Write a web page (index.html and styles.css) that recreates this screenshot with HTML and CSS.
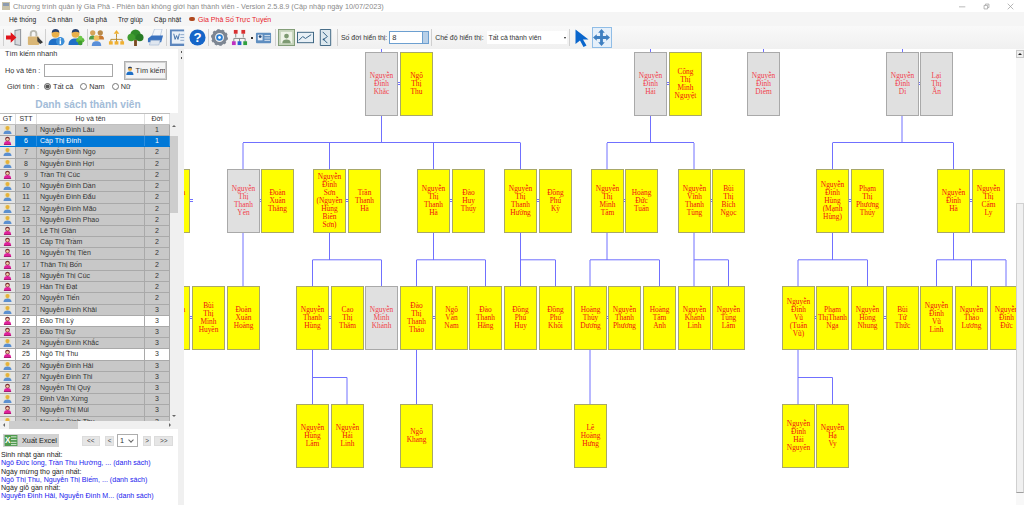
FILE: index.html
```html
<!DOCTYPE html>
<html lang="vi">
  <head>
    <meta charset="UTF-8" />
    <title>Chương trình quản lý Gia Phả</title>
    <link rel="stylesheet" href="styles.css">
  </head>
  <body>
    <svg class="sprites" width="0" height="0">
      <defs>
        <symbol id="male" viewBox="0 0 10 10">
          <rect x="1.5" y="0.5" width="7" height="9" fill="#e8e2c8"/>
          <path d="M0.5 10c0-3 2-4 4.5-4s4.500 1 4.500 4z" fill="#5b8fd0"/>
          <circle cx="5" cy="3.400" r="2.300" fill="#e6b23a"/>
        </symbol>
        <symbol id="female" viewBox="0 0 10 10">
          <path d="M1 9.500c0-3 1.500-4 4-4s4 1 4 4z" fill="#e0209a"/>
          <circle cx="5" cy="3.300" r="2.600" fill="#7a2a30"/>
          <circle cx="5" cy="3.800" r="1.500" fill="#f3c9a5"/>
          <rect x="1" y="9" width="8" height="1" fill="#a0106a"/>
        </symbol>
        <symbol id="user" viewBox="0 0 18 18">
          <circle cx="8" cy="5" r="4.200" fill="#e9b04a"/>
          <path d="M4 4c0-3 2-4 4-4s4 1 4 4c-2-1.500-5-1.500-8 0z" fill="#27406e"/>
          <path d="M0.500 17c0-5 3-7 7.500-7s7 2 7 7z" fill="#1f6fc6"/>
        </symbol>
      </defs>
    </svg>

    <div class="titlebar">
      <svg class="app-icon" viewBox="0 0 8 8"><rect width="8" height="8" fill="#c9c2a8"/><rect x="1" y="1" width="6" height="3" fill="#8c9bb0"/></svg>
      <span class="title-text">Chương trình quản lý Gia Phả - Phiên bản không giới hạn thành viên - Version 2.5.8.9 (Cập nhập ngày 10/07/2023)</span>
      <div class="win-buttons">
        <svg viewBox="0 0 10 10"><path d="M0 5.500h9" stroke="#999" fill="none"/></svg>
        <svg viewBox="0 0 10 10"><path d="M1.500 3.500h5v5h-5zM3.500 3V1.500h5v5H7" stroke="#999" fill="none"/></svg>
        <svg viewBox="0 0 10 10"><path d="M1 1l8 8M9 1l-8 8" stroke="#999" fill="none"/></svg>
      </div>
    </div>

    <div class="menubar">
      <span class="menu-item">Hệ thống</span>
      <span class="menu-item">Cá nhân</span>
      <span class="menu-item">Gia phả</span>
      <span class="menu-item">Trợ giúp</span>
      <span class="menu-item">Cập nhật</span>
      <span class="menu-online"><i class="online-dot"></i>Gia Phả Số Trực Tuyến</span>
    </div>

    <div class="toolbar">
      <i class="sep sep-first"></i>
      <svg class="tool" viewBox="0 0 18 18"><path d="M9 1l7-1v18l-7-1z" fill="#8a8f96"/><path d="M10 2l5-1v16l-5-1z" fill="#d7dade"/><path d="M0 7h5V3.500L11 9l-6 5.500V11H0z" fill="#e0141c"/></svg>
      <svg class="tool" viewBox="0 0 18 18"><path d="M4 8V5a4 4 0 0 1 8 0v3h-2V5a2 2 0 0 0-4 0v3z" fill="#b9b9b0"/><rect x="2" y="8" width="12" height="9" rx="1" fill="#d9b676"/><path d="M12 8l6 6-3 2-3-3z" fill="#3a3a3a"/></svg>
      <i class="sep"></i>
      <svg class="tool" viewBox="0 0 18 18"><use href="#user" width="18" height="18"/><circle cx="13" cy="13" r="4.500" fill="#3b8ed8"/><rect x="12.300" y="12" width="1.500" height="4" fill="#fff"/><rect x="12.300" y="9.800" width="1.500" height="1.400" fill="#fff"/></svg>
      <svg class="tool" viewBox="0 0 18 18"><use href="#user" width="18" height="18"/><circle cx="11" cy="12" r="2.400" fill="#5cb83c"/><circle cx="15" cy="12" r="2.400" fill="#5cb83c"/><circle cx="13" cy="9.500" r="2.400" fill="#6fca4c"/><circle cx="13" cy="14.800" r="2.400" fill="#3f9c2c"/></svg>
      <i class="sep sep-thin"></i>
      <svg class="tool" viewBox="0 0 18 18"><circle cx="5" cy="4" r="2.800" fill="#d8a45a"/><path d="M1 11c0-3 2-4 4-4s4 1 4 4z" fill="#4f9c46"/><circle cx="13" cy="4" r="2.800" fill="#b98a4a"/><path d="M9 11c0-3 2-4 4-4s4 1 4 4z" fill="#c87830"/><circle cx="9" cy="9.500" r="3" fill="#f0c060"/><path d="M4 18c0-4 2-5 5-5s5 1 5 5z" fill="#5a8fd8"/></svg>
      <svg class="tool" viewBox="0 0 18 18"><path d="M9 5v4M3 14v-3h12v3M9 9v5" stroke="#b88a2a" fill="none"/><path d="M9 1l3 4H6z" fill="#f0b030"/><rect x="1" y="13" width="4" height="3.500" fill="#f0b030"/><rect x="7" y="13" width="4" height="3.500" fill="#f0b030"/><rect x="13" y="13" width="4" height="3.500" fill="#f0b030"/></svg>
      <svg class="tool" viewBox="0 0 18 18"><rect x="7.500" y="11" width="3" height="7" fill="#7a4a20"/><circle cx="9" cy="6" r="5.500" fill="#2f8a2a"/><circle cx="4.500" cy="9" r="4" fill="#3f9c30"/><circle cx="13.500" cy="9" r="4" fill="#277a24"/></svg>
      <svg class="tool" viewBox="0 0 18 18"><path d="M8 0h8l-2 8H5z" fill="#f2f5fa" stroke="#8aa6c8" stroke-width="0.500"/><path d="M1 10l4-3h12l-2 7H1z" fill="#3a72c0"/><path d="M4 12h10l-1.500 5H2.500z" fill="#dfe6ef" stroke="#8aa6c8" stroke-width="0.500"/></svg>
      <i class="sep"></i>
      <svg class="tool" viewBox="0 0 18 18"><rect x="1" y="0.500" width="15" height="17.500" fill="#5c86bd"/><rect x="3" y="2.500" width="14" height="13" fill="#eaf0f7"/><path d="M5 5l1.500 6L8 7l1.500 4L11 5" stroke="#3f6ea8" fill="none"/><path d="M12 6h4M12 9h4M12 12h4" stroke="#8aa6c8"/></svg>
      <svg class="tool" viewBox="0 0 18 18"><circle cx="9" cy="9" r="8.500" fill="#1565c8"/><text x="9" y="14" text-anchor="middle" class="help-mark">?</text></svg>
      <i class="sep"></i>
      <svg class="tool" viewBox="0 0 18 18"><circle cx="9" cy="9" r="6.500" fill="none" stroke="#7d8692" stroke-width="3.500"/><circle cx="9" cy="9" r="8" fill="none" stroke="#7d8692" stroke-width="2" stroke-dasharray="2.500 2.500"/><circle cx="9" cy="9" r="3.500" fill="#2a7fd4"/><circle cx="9" cy="9" r="1.500" fill="#fff"/></svg>
      <svg class="tool" viewBox="0 0 18 18"><path d="M5 5v4M13 5v4M3 14v-4h12v4M9 10v4" stroke="#888" fill="none"/><rect x="3" y="1" width="4" height="4" fill="#d83030"/><rect x="11" y="1" width="4" height="4" fill="#d83030"/><rect x="1" y="13" width="4" height="4" fill="#c030c0"/><rect x="7" y="13" width="4" height="4" fill="#2a60d0"/><rect x="13" y="13" width="4" height="4" fill="#30a040"/></svg>
      <i class="tool-dot"></i>
      <svg class="tool" viewBox="0 0 18 18"><rect x="1" y="4" width="16" height="11" rx="1" fill="#5f8ec0"/><rect x="3" y="6" width="5" height="6" fill="#e8eef6"/><circle cx="5.500" cy="8" r="1.500" fill="#274a78"/><path d="M10 7h6M10 9.500h6M10 12h6" stroke="#dfe8f2"/></svg>
      <i class="sep"></i>
      <svg class="tool" viewBox="0 0 18 18"><rect x="0.500" y="0.500" width="17" height="17" fill="#c6d4bc" stroke="#7e9a74"/><rect x="3" y="3" width="12" height="12" fill="#eef3e8"/><circle cx="9" cy="7.500" r="2.500" fill="#7d9a72"/><path d="M4.500 15c0-3 2-4 4.500-4s4.500 1 4.500 4z" fill="#7d9a72"/></svg>
      <svg class="tool" viewBox="0 0 18 18"><rect x="0.500" y="3.500" width="17" height="11" fill="#e8f0f6" stroke="#39627f"/><path d="M2 12l4-4 3 2 6-4" stroke="#2a5a80" fill="none"/></svg>
      <svg class="tool" viewBox="0 0 18 18"><path d="M3.500 0.500h11v17h-11z" fill="#dce8ee" stroke="#39627f"/><path d="M6 3l5 5-4 3 4 4" stroke="#2a5a80" fill="none"/><circle cx="7" cy="11" r="1" fill="#2a5a80"/></svg>
      <i class="sep sep-wide"></i>
      <label class="tool-label">Số đời hiển thị:</label>
      <div class="spin"><span class="spin-value">8</span><span class="spin-btn"></span></div>
      <i class="sep sep-combo"></i>
      <label class="tool-label">Chế độ hiển thị:</label>
      <div class="combo"><span>Tất cả thành viên</span><i class="combo-arrow"></i></div>
      <i class="sep sep-combo"></i>
      <svg class="tool-pointer" viewBox="0 0 14 18"><path d="M0.500 0.500L13.500 10.500H8L11.500 16.500L8.500 18L5 11.500L0.500 15z" fill="#0a66cc"/></svg>
      <span class="tool-move">
        <svg viewBox="0 0 18 18"><path d="M9 0l3.500 4H10.500v3.500H14V5.500L18 9l-4 3.500v-2h-3.500V14h2L9 18l-3.500-4h2v-3.500H4v2L0 9l4-3.500v2h3.500V4h-2z" fill="#3f7fc0"/></svg>
      </span>
    </div>

    <div class="main">
      <aside class="sidebar">
        <div class="sidebar-white">
          <div class="search-title">Tìm kiếm nhanh</div>
          <div class="search-row">
            <span class="search-label">Họ và tên :</span>
            <input class="search-input" type="text" />
            <button class="search-btn">
              <svg viewBox="0 0 18 18"><use href="#user" width="18" height="18"/></svg>Tìm kiếm
            </button>
          </div>
          <div class="gender-row">
            <span class="gender-label">Giới tính :</span>
            <label class="radio"><input type="radio" name="gt" checked />Tất cả</label>
            <label class="radio"><input type="radio" name="gt" />Nam</label>
            <label class="radio"><input type="radio" name="gt" />Nữ</label>
          </div>
          <h2 class="list-title">Danh sách thành viên</h2>
        </div>

        <div class="list-wrap">
          <div class="list">
            <div class="list-row list-head">
              <span>GT</span><span>STT</span><span>Họ và tên</span><span>Đời</span>
            </div>
            <div id="rows" class="list-rows"></div>
          </div>
          <div class="vscroll">
            <i class="arrow-up"></i>
            <i class="vscroll-thumb"></i>
            <i class="arrow-down"></i>
          </div>
        </div>
        <div class="hscroll">
          <i class="arrow-left"></i>
          <i class="hscroll-thumb"></i>
          <i class="arrow-right"></i>
        </div>

        <div class="pager">
          <button class="excel-btn">
            <svg viewBox="0 0 14 12"><rect width="14" height="12" fill="#4f9a4f"/><path d="M7 2h6M7 5h6M7 8h6M7 10.500h6" stroke="#dfeedd"/><text x="3.500" y="9" text-anchor="middle" class="excel-mark">X</text></svg>
            Xuất Excel
          </button>
          <button class="page-btn page-wide">&lt;&lt;</button>
          <button class="page-btn">&lt;</button>
          <div class="page-select"><span>1</span><i class="combo-chevron"></i></div>
          <button class="page-btn">&gt;</button>
          <button class="page-btn page-wide">&gt;&gt;</button>
        </div>

        <div class="events">
          <p>Sinh nhật gần nhất:</p>
          <a>Ngô Đức long, Trần Thu Hường, ... (danh sách)</a>
          <p>Ngày mừng thọ gần nhất:</p>
          <a>Ngô Thị Thu, Nguyễn Thị Biếm, ... (danh sách)</a>
          <p>Ngày giỗ gần nhất:</p>
          <a>Nguyễn Đình Hải, Nguyễn Đình M... (danh sách)</a>
        </div>
      </aside>

      <div class="splitter"><i></i><i></i></div>

      <section class="tree-pane">
        <div id="canvas" class="canvas"></div>
      </section>

      <div class="page-scroll">
        <i class="page-scroll-up"></i>
        <i class="page-scroll-thumb"></i>
      </div>
    </div>

    <script src="app.js"></script>
  </body>
</html>
```

FILE: styles.css
```css
* {
  box-sizing: border-box;
}
html,
body {
  margin: 0;
  height: 505px;
  overflow: hidden;
}
body {
  font-family: "Liberation Sans", Arial, sans-serif;
  font-size: 7.5px;
  color: #333;
  background-color: #fff;
  display: flex;
  flex-direction: column;
}
i {
  display: block;
}
.sprites {
  position: absolute;
}
.titlebar {
  height: 12px;
  flex: none;
  display: flex;
  align-items: center;
  padding-left: 2px;
  background-color: #fff;
}
.app-icon {
  width: 8px;
  height: 8px;
  margin-right: 3px;
}
.title-text {
  color: #8a8a8a;
  font-size: 7.25px;
  white-space: nowrap;
}
.win-buttons {
  margin-left: auto;
  display: flex;
  gap: 17px;
  padding-right: 10px;
}
.win-buttons svg {
  width: 7px;
  height: 7px;
}
.menubar {
  height: 14px;
  flex: none;
  display: flex;
  align-items: center;
  padding-left: 9px;
  gap: 11px;
  background-color: #f5f5f5;
}
.menu-item {
  color: #222;
  font-size: 6.7px;
}
.menu-online {
  display: flex;
  align-items: center;
  color: #e81c2c;
  font-size: 7px;
  margin-left: -3px;
}
.online-dot {
  width: 6px;
  height: 4px;
  margin-right: 3px;
  background-color: #b04a20;
  border-radius: 2px;
}
.toolbar {
  height: 23px;
  flex: none;
  display: flex;
  align-items: center;
  padding-left: 2px;
  background: linear-gradient(#f9f9f9, #f0f0f0);
}
.sep {
  width: 1px;
  height: 17px;
  flex: none;
  margin: 0 2px 0 0;
  background-color: #d0d0d0;
}
.sep-first {
  margin: 0 2px 0 1px;
}
.sep-thin {
  margin: 0;
}
.sep-wide {
  margin: 0 2px 0 1px;
}
.sep-combo {
  margin: 0 2px;
}
.tool {
  width: 17px;
  height: 17px;
  margin-right: 2.5px;
  flex: none;
}
.tool-dot {
  width: 2px;
  height: 2px;
  margin: 0 2px 0 1px;
  background-color: #333;
}
.help-mark {
  font-family: "Liberation Sans", Arial, sans-serif;
  font-size: 14px;
  font-weight: bold;
  fill: #fff;
}
.excel-mark {
  font-family: "Liberation Sans", Arial, sans-serif;
  font-size: 9px;
  font-weight: bold;
  fill: #fff;
}
.tool-label {
  color: #333;
  font-size: 6.9px;
  white-space: nowrap;
  margin: 0 2px 0 1px;
}
.spin {
  width: 40px;
  height: 13px;
  display: flex;
  border: 1px solid #6c9fd0;
  background-color: #fff;
}
.spin-value {
  flex: 1;
  padding-left: 2px;
  font-size: 7.5px;
  line-height: 11px;
}
.spin-btn {
  width: 6px;
  background-color: #b8d0e8;
  border-left: 1px solid #6c9fd0;
}
.combo {
  width: 80px;
  height: 13px;
  display: flex;
  align-items: center;
  justify-content: space-between;
  padding: 0 1px 0 2px;
  margin-left: 1px;
  background-color: #fff;
  font-size: 6.9px;
}
.combo-arrow {
  width: 0;
  height: 0;
  border-left: 1.500px solid transparent;
  border-right: 1.500px solid transparent;
  border-top: 2px solid #222;
}
.tool-pointer {
  width: 14px;
  height: 18px;
  margin: 0 3px;
}
.tool-move {
  width: 20px;
  height: 21px;
  display: flex;
  align-items: center;
  justify-content: center;
  background-color: #e6f0fa;
  border: 1px solid #90bde6;
}
.tool-move svg {
  width: 17px;
  height: 17px;
}
.main {
  flex: 1;
  display: flex;
  min-height: 0;
}
.sidebar {
  width: 178px;
  flex: none;
  display: flex;
  flex-direction: column;
  background-color: #fff;
}
.sidebar-white {
  height: 64px;
  flex: none;
  padding: 0 4px 0 5px;
}
.search-title {
  font-size: 7.3px;
  padding-top: 1px;
  line-height: 8px;
}
.search-row {
  display: flex;
  align-items: center;
  height: 19px;
  margin-top: 3px;
}
.search-label {
  width: 39px;
  font-size: 7.3px;
}
.search-input {
  width: 69px;
  height: 13px;
  padding: 0;
  border: 1px solid #a8a8a8;
  background-color: #fff;
}
.search-btn {
  width: 43px;
  height: 19px;
  margin-left: 11px;
  padding: 0;
  display: flex;
  align-items: center;
  justify-content: center;
  gap: 1px;
  border: 1px solid #b0b0b0;
  outline: 1px solid #d0d0d0;
  outline-offset: -2px;
  background-color: #f4f4f4;
  font-family: inherit;
  font-size: 7.3px;
  color: #333;
}
.search-btn svg {
  width: 9px;
  height: 10px;
}
.gender-row {
  display: flex;
  align-items: center;
  height: 11px;
  margin-top: 1px;
  padding-left: 2px;
}
.gender-label {
  width: 37px;
  font-size: 7.3px;
}
.radio {
  display: flex;
  align-items: center;
  gap: 2px;
  margin-right: 7px;
  font-size: 7.3px;
}
.radio input {
  width: 7px;
  height: 7px;
  margin: 0;
  accent-color: #555;
}
.list-title {
  margin: 7px 0 0;
  text-align: center;
  padding-right: 3px;
  color: #a3bcd8;
  font-size: 10.2px;
  line-height: 12px;
  font-weight: bold;
}
.list-wrap {
  height: 308px;
  flex: none;
  display: flex;
}
.list {
  width: 170px;
  overflow: hidden;
  background-color: #fff;
}
.list-row {
  display: grid;
  grid-template-columns: 16px 21px 108px 25px;
  align-items: center;
  height: 11.22px;
  font-size: 7px;
  color: #333;
  background-color: #c8c8c8;
  border-bottom: 1px solid #a9a9a9;
}
.list-row span {
  height: 100%;
  text-align: center;
  line-height: 10px;
  border-right: 1px solid #a9a9a9;
  white-space: nowrap;
  overflow: hidden;
}
.list-row .name {
  text-align: left;
  padding-left: 3px;
}
.list-row svg {
  display: block;
  width: 9px;
  height: 9px;
  margin: 0 auto;
}
.list-row .gt-cell {
  background-color: #e4e4e4;
}
.list-head {
  height: 12px;
  background-color: #fff;
  border-top: 1px solid #c0c0c0;
  border-bottom: 1px solid #c0c0c0;
}
.list-head span {
  border-right: 1px solid #e0e0e0;
}
.row-white {
  background-color: #fff;
}
.row-white .gt-cell {
  background-color: #fff;
}
.row-selected {
  background-color: #0078d7;
  color: #fff;
  border-bottom-color: #0078d7;
}
.row-selected span {
  border-right-color: #2a8ee0;
}
.vscroll {
  width: 8px;
  display: flex;
  flex-direction: column;
  background-color: #f0f0f0;
}
.arrow-up {
  height: 9px;
  margin: 3px auto 0;
  width: 0;
  border-left: 2px solid transparent;
  border-right: 2px solid transparent;
  border-bottom: 2px solid #666;
  border-top: 0;
  box-sizing: content-box;
}
.vscroll-thumb {
  height: 77px;
  margin-top: 9px;
  background-color: #cdcdcd;
}
.arrow-down {
  width: 0;
  margin: auto auto 4px;
  border-left: 2px solid transparent;
  border-right: 2px solid transparent;
  border-top: 2px solid #666;
}
.hscroll {
  height: 8px;
  flex: none;
  display: flex;
  align-items: center;
  padding: 0 7px 0 3px;
  background-color: #f0f0f0;
}
.arrow-left {
  width: 0;
  border-top: 2px solid transparent;
  border-bottom: 2px solid transparent;
  border-right: 2px solid #666;
}
.arrow-right {
  width: 0;
  margin-left: auto;
  border-top: 2px solid transparent;
  border-bottom: 2px solid transparent;
  border-left: 2px solid #666;
}
.hscroll-thumb {
  width: 69px;
  height: 8px;
  margin-left: 4px;
  background-color: #cdcdcd;
}
.pager {
  height: 22px;
  flex: none;
  display: flex;
  align-items: center;
  padding-left: 3px;
  padding-top: 1px;
}
.excel-btn {
  width: 57px;
  height: 13px;
  padding: 0 0 0 1px;
  margin-right: 23px;
  display: flex;
  align-items: center;
  gap: 4px;
  border: 0;
  background-color: #d2d2d2;
  font-family: inherit;
  font-size: 7.3px;
  color: #222;
}
.excel-btn svg {
  width: 14px;
  height: 11px;
}
.page-btn {
  width: 9px;
  height: 10px;
  padding: 0;
  margin-right: 3px;
  border: 1px solid #dcdcdc;
  background-color: #e6e6e6;
  font-family: inherit;
  font-size: 6.5px;
  line-height: 8px;
  color: #444;
}
.page-wide {
  width: 19px;
  margin-right: 5px;
}
.page-select {
  width: 21px;
  height: 13px;
  margin-right: 5px;
  margin-left: 0;
  display: flex;
  align-items: center;
  justify-content: space-between;
  padding: 0 4px 0 2px;
  border: 1px solid #adadad;
  background-color: #fff;
  font-size: 7.3px;
}
.combo-chevron {
  width: 4px;
  height: 4px;
  margin-top: -2px;
  border-right: 1px solid #666;
  border-bottom: 1px solid #666;
  transform: rotate(45deg);
}
.events {
  padding-left: 1px;
  font-size: 7.1px;
  line-height: 8.3px;
}
.events p {
  margin: 0;
  color: #222;
}
.events a {
  display: block;
  color: #2222ee;
  white-space: nowrap;
}
.splitter {
  width: 6px;
  flex: none;
  display: flex;
  flex-direction: column;
  align-items: center;
  gap: 4px;
  padding-top: 2px;
  background-color: #f0f0f0;
}
.splitter i {
  width: 1px;
  height: 2px;
  background-color: #555;
}
.tree-pane {
  flex: 1;
  position: relative;
  overflow: hidden;
  background-color: #fff;
}
.canvas {
  position: absolute;
  left: -184px;
  top: -49px;
  width: 1200px;
  height: 505px;
}
.links {
  position: absolute;
  left: 0;
  top: 0;
}
.node {
  position: absolute;
  width: 33px;
  height: 64px;
  display: flex;
  align-items: center;
  justify-content: center;
  text-align: center;
  white-space: pre-line;
  background-color: #ffff00;
  border: 1px solid #a8a868;
  color: #f01010;
  font-family: "Liberation Serif", "Times New Roman", serif;
  font-size: 7.4px;
  line-height: 8px;
}
.node-gray {
  background-color: #e0e0e0;
  border-color: #a9a9a9;
  color: #f2404c;
}
.page-scroll {
  width: 8px;
  flex: none;
  display: flex;
  flex-direction: column;
  background-color: #f8f8f8;
}
.page-scroll-up {
  height: 8px;
  margin-top: 1px;
  background-color: #eee;
  border: 1px solid #c8c8c8;
  position: relative;
}
.page-scroll-up::after {
  content: "";
  position: absolute;
  left: 1px;
  top: 2px;
  border-left: 2px solid transparent;
  border-right: 2px solid transparent;
  border-bottom: 2px solid #222;
}
.page-scroll-thumb {
  height: 290px;
  margin-top: 145px;
  background-color: #f0f0f0;
  border: 1px solid #d0d0d0;
  border-bottom-color: #a0a0a0;
}
```

FILE: app.js
```js
const members = [
  [5, "Nguyễn Đình Lâu", 1, "m"],
  [6, "Cáp Thị Đính", 1, "f", "selected"],
  [7, "Nguyễn Đình Ngọ", 2, "m"],
  [8, "Nguyễn Đình Hợi", 2, "m"],
  [9, "Trần Thị Cúc", 2, "f"],
  [10, "Nguyễn Đình Dần", 2, "m"],
  [11, "Nguyễn Đình Đẩu", 2, "m"],
  [12, "Nguyễn Đình Mão", 2, "m"],
  [13, "Nguyễn Đình Phao", 2, "m"],
  [14, "Lê Thị Gián", 2, "f"],
  [15, "Cáp Thị Trầm", 2, "f"],
  [16, "Nguyễn Thị Tiền", 2, "f"],
  [17, "Thân Thị Bốn", 2, "f"],
  [18, "Nguyễn Thị Cúc", 2, "f"],
  [19, "Hán Thị Đạt", 2, "f"],
  [20, "Nguyễn Tiến", 2, "m"],
  [21, "Nguyễn Đình Khải", 3, "m"],
  [22, "Đào Thị Lý", 3, "f", "white"],
  [23, "Đào Thị Sự", 3, "f"],
  [24, "Nguyễn Đình Khắc", 3, "m"],
  [25, "Ngô Thị Thu", 3, "f", "white"],
  [26, "Nguyễn Đình Hải", 3, "m"],
  [27, "Nguyễn Đình Thi", 3, "m"],
  [28, "Nguyễn Thị Quý", 3, "f"],
  [29, "Đinh Văn Xứng", 3, "m"],
  [30, "Nguyễn Thị Mùi", 3, "f"],
  [31, "Nguyễn Đình Thu", 3, "m"],
];

const rowsElem = document.getElementById("rows");
members.forEach(([stt, name, gen, sex, mark]) => {
  const row = document.createElement("div");
  row.className = "list-row" + (mark ? " row-" + mark : "");
  row.innerHTML =
    `<span class="gt-cell"><svg><use href="#${sex === "m" ? "male" : "female"}"/></svg></span>` +
    `<span>${stt}</span><span class="name">${name}</span><span>${gen}</span>`;
  rowsElem.appendChild(row);
});

// Row tops of the tree, in page pixels
const ROW = [52, 169, 286, 404];

// [text, left, row, gray]
const nodes = [
  ["Nguyễn\nĐình\nKhắc", 365, 0, true],
  ["Ngô\nThị\nThu", 400, 0],
  ["Nguyễn\nĐình\nHải", 634, 0, true],
  ["Công\nThị\nMinh\nNguyệt", 669, 0],
  ["Nguyễn\nĐình\nDiễm", 747, 0, true],
  ["Nguyễn\nĐình\nDi", 886, 0, true],
  ["Lại\nThị\nÂn", 920, 0, true],

  ["Nguyễn\nĐình\nHợi", 157, 1],
  ["Nguyễn\nThị\nThanh\nYên", 227, 1, true],
  ["Đoàn\nXuân\nThắng", 261, 1],
  ["Nguyễn\nĐình\nSơn\n(Nguyễn\nHùng\nBiên\nSơn)", 313, 1],
  ["Trần\nThanh\nHà", 348, 1],
  ["Nguyễn\nThị\nThanh\nHà", 417, 1],
  ["Đào\nHuy\nThủy", 452, 1],
  ["Nguyễn\nThị\nThanh\nHường", 504, 1],
  ["Đồng\nPhú\nKỳ", 539, 1],
  ["Nguyễn\nThị\nMinh\nTâm", 591, 1],
  ["Hoàng\nĐức\nTuấn", 625, 1],
  ["Nguyễn\nVĩnh\nThanh\nTùng", 678, 1],
  ["Bùi\nThị\nBích\nNgọc", 712, 1],
  ["Nguyễn\nĐình\nHùng\n(Mạnh\nHùng)", 816, 1],
  ["Phạm\nThị\nPhương\nThúy", 851, 1],
  ["Nguyễn\nĐình\nHà", 937, 1],
  ["Nguyễn\nThị\nCẩm\nLy", 972, 1],

  ["Nguyễn\nXuân\nBình", 157, 2],
  ["Bùi\nThị\nMinh\nHuyền", 192, 2],
  ["Đoàn\nXuân\nHoàng", 227, 2],
  ["Nguyễn\nThanh\nHùng", 296, 2],
  ["Cao\nThị\nThắm", 331, 2],
  ["Nguyễn\nMinh\nKhánh", 365, 2, true],
  ["Đào\nThị\nThanh\nThảo", 400, 2],
  ["Ngô\nVăn\nNam", 435, 2],
  ["Đào\nThanh\nHằng", 469, 2],
  ["Đồng\nPhú\nHuy", 504, 2],
  ["Đồng\nPhú\nKhôi", 539, 2],
  ["Hoàng\nThùy\nDương", 574, 2],
  ["Nguyễn\nThanh\nPhương", 608, 2],
  ["Hoàng\nTâm\nAnh", 643, 2],
  ["Nguyễn\nKhánh\nLinh", 678, 2],
  ["Nguyễn\nTùng\nLâm", 712, 2],
  ["Nguyễn\nĐình\nVũ\n(Tuấn\nVũ)", 782, 2],
  ["Phạm\nThịThanh\nNga", 816, 2],
  ["Nguyễn\nHồng\nNhung", 851, 2],
  ["Bùi\nTứ\nThức", 886, 2],
  ["Nguyễn\nĐình\nVũ\nLinh", 920, 2],
  ["Nguyễn\nThảo\nLương", 955, 2],
  ["Nguyễn\nĐình\nĐức", 990, 2],

  ["Nguyễn\nHùng\nLâm", 296, 3],
  ["Nguyễn\nHải\nLinh", 331, 3],
  ["Ngô\nKhang", 400, 3],
  ["Lê\nHoàng\nHưng", 574, 3],
  ["Nguyễn\nĐình\nHải\nNguyên", 782, 3],
  ["Nguyễn\nHạ\nVy", 816, 3],
];

// Connector segments: x1 y1 x2 y2. Whole-pixel coordinates come out as the
// wider, paler lines seen on some branches.
const links = [
  // stubs above the first row
  [381.5, 48, 381.5, 52], [650.5, 48, 650.5, 52], [763.5, 48, 763.5, 52], [902.5, 48, 902.5, 52],
  // generation 1 to 2
  [381.5, 116, 381.5, 143], [243, 142.5, 520.5, 142.5],
  [243, 143, 243, 169], [329.5, 143, 329.5, 169], [433.5, 143, 433.5, 169], [520.5, 143, 520.5, 169],
  [650.5, 116, 650.5, 143], [607, 142.5, 694, 142.5], [607, 143, 607, 169], [694, 143, 694, 169],
  [902, 116, 902, 143], [832.5, 142.5, 953.5, 142.5], [832.5, 143, 832.5, 169], [953.5, 143, 953.5, 169],
  // generation 2 to 3
  [243, 233, 243, 286],
  [329.5, 233, 329.5, 260], [312.5, 259.8, 381.5, 259.8], [312.5, 260, 312.5, 286], [381.5, 260, 381.5, 286],
  [433.5, 233, 433.5, 260], [416.5, 259.8, 485.5, 259.8], [416.5, 260, 416.5, 286], [485.5, 260, 485.5, 286],
  [520.5, 233, 520.5, 286], [520.5, 259.8, 555.5, 259.8], [555.5, 260, 555.5, 286],
  [607, 233, 607, 260], [590, 259.8, 659.5, 259.8], [590, 260, 590, 286], [659.5, 260, 659.5, 286],
  [694, 233, 694, 286], [694, 259.8, 728.5, 259.8], [728.5, 260, 728.5, 286],
  [832.5, 233, 832.5, 260], [798, 259.8, 867.5, 259.8], [798, 260, 798, 286], [867.5, 260, 867.5, 286],
  [953.5, 233, 953.5, 260], [936.5, 259.8, 1006, 259.8], [936.5, 260, 936.5, 286], [971.5, 260, 971.5, 286], [1006, 260, 1006, 286],
  // generation 3 to 4
  [312.5, 350, 312.5, 404], [312.5, 377.5, 347, 377.5], [347, 377.5, 347, 404],
  [416.5, 350, 416.5, 404],
  [590, 350, 590, 404],
  [798, 350, 798, 404], [798, 377.5, 832.5, 377.5], [832.5, 377.5, 832.5, 404],
];

// Couples: the double dash between two cards, [left edge x, row]
const couples = [
  [398, 0], [667, 0], [918, 0],
  [190, 1], [260, 1], [346, 1], [450, 1], [537, 1], [624, 1], [710, 1], [849, 1], [970, 1],
  [190, 2], [329, 2], [433, 2], [606, 2], [814, 2], [884, 2],
];

const canvas = document.getElementById("canvas");

const svgNS = "http://www.w3.org/2000/svg";
const svg = document.createElementNS(svgNS, "svg");
svg.setAttribute("class", "links");
svg.setAttribute("width", "1200");
svg.setAttribute("height", "505");

function addLine(x1, y1, x2, y2) {
  const line = document.createElementNS(svgNS, "line");
  line.setAttribute("x1", x1);
  line.setAttribute("y1", y1);
  line.setAttribute("x2", x2);
  line.setAttribute("y2", y2);
  line.setAttribute("stroke", "#7070ff");
  svg.appendChild(line);
}

links.forEach((l) => addLine(l[0], l[1], l[2], l[3]));
couples.forEach(([x, row]) => {
  const mid = ROW[row] + 31;
  addLine(x, mid - 0.5, x + 3, mid - 0.5);
  addLine(x, mid + 1.5, x + 3, mid + 1.5);
});
canvas.appendChild(svg);

nodes.forEach(([text, left, row, gray]) => {
  const node = document.createElement("div");
  node.className = "node" + (gray ? " node-gray" : "");
  node.style.left = left + "px";
  node.style.top = ROW[row] + "px";
  node.textContent = text;
  canvas.appendChild(node);
});
```
